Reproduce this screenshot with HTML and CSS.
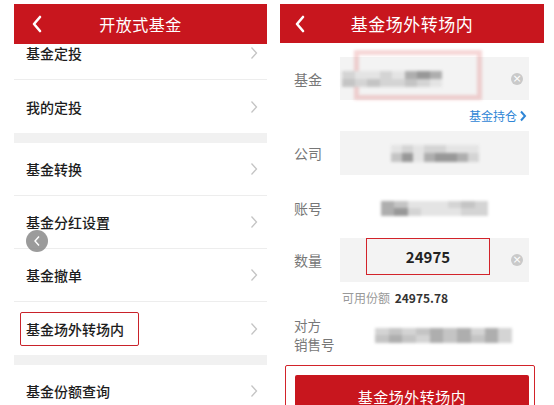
FILE: index.html
```html
<!DOCTYPE html>
<html lang="zh-CN">
<head>
    <meta charset="UTF-8">
    <meta name="viewport" content="width=device-width, initial-scale=1.0">
    <title>基金场外转场内</title>
    <link rel="stylesheet" href="styles.css">
</head>
<body>
    <!-- Ecranul din stanga: lista fondurilor -->
    <section class="panel panel-left">
        <header class="topbar">
            <svg class="back" width="12" height="18" viewBox="0 0 12 18"><polyline points="9,2 3,9 9,16" fill="none" stroke="#fff" stroke-width="2.6" stroke-linecap="round" stroke-linejoin="round"/></svg>
            <h1>开放式基金</h1>
            <span></span>
        </header>
        <div class="menu">
            <div class="item"><span>基金定投</span><svg class="arrow" width="8" height="14" viewBox="0 0 8 14"><polyline points="1.5,1.5 6.5,7 1.5,12.5" fill="none" stroke="#c4c4c4" stroke-width="1.3"/></svg></div>
            <div class="item last"><span>我的定投</span><svg class="arrow" width="8" height="14" viewBox="0 0 8 14"><polyline points="1.5,1.5 6.5,7 1.5,12.5" fill="none" stroke="#c4c4c4" stroke-width="1.3"/></svg></div>
            <div class="band"></div>
            <div class="item"><span>基金转换</span><svg class="arrow" width="8" height="14" viewBox="0 0 8 14"><polyline points="1.5,1.5 6.5,7 1.5,12.5" fill="none" stroke="#c4c4c4" stroke-width="1.3"/></svg></div>
            <div class="item"><span>基金分红设置</span><svg class="arrow" width="8" height="14" viewBox="0 0 8 14"><polyline points="1.5,1.5 6.5,7 1.5,12.5" fill="none" stroke="#c4c4c4" stroke-width="1.3"/></svg></div>
            <div class="item"><span>基金撤单</span><svg class="arrow" width="8" height="14" viewBox="0 0 8 14"><polyline points="1.5,1.5 6.5,7 1.5,12.5" fill="none" stroke="#c4c4c4" stroke-width="1.3"/></svg></div>
            <div class="item last"><span class="marked">基金场外转场内</span><svg class="arrow" width="8" height="14" viewBox="0 0 8 14"><polyline points="1.5,1.5 6.5,7 1.5,12.5" fill="none" stroke="#c4c4c4" stroke-width="1.3"/></svg></div>
            <div class="band"></div>
            <div class="item"><span>基金份额查询</span><svg class="arrow" width="8" height="14" viewBox="0 0 8 14"><polyline points="1.5,1.5 6.5,7 1.5,12.5" fill="none" stroke="#c4c4c4" stroke-width="1.3"/></svg></div>
        </div>
        <div class="float-back">
            <svg width="8" height="12" viewBox="0 0 8 12"><polyline points="6,1.5 2,6 6,10.5" fill="none" stroke="#fff" stroke-width="1.4"/></svg>
        </div>
    </section>

    <!-- Ecranul din dreapta: formularul de transfer -->
    <section class="panel panel-right">
        <header class="topbar">
            <svg class="back" width="12" height="18" viewBox="0 0 12 18"><polyline points="9,2 3,9 9,16" fill="none" stroke="#fff" stroke-width="2.6" stroke-linecap="round" stroke-linejoin="round"/></svg>
            <h1>基金场外转场内</h1>
            <span></span>
        </header>

        <div class="row row-fund">
            <label class="lbl">基金</label>
            <div class="field grey">
                <div class="pink-mark"></div>
                <div class="mosaic m-fund">
                    <i class="c2"></i><i class="c1"></i><i class="c1"></i><i class="c2"></i><i class="c1"></i><i class="c4"></i><i class="c5"></i><i class="c4"></i>
                    <i class="c3"></i><i class="c2"></i><i class="c3"></i><i class="c2"></i><i class="c2"></i><i class="c3"></i><i class="c2"></i><i class="c1"></i>
                </div>
                <span class="clear">×</span>
            </div>
        </div>
        <div class="hold-link">基金持仓<svg width="8" height="12" viewBox="0 0 8 12"><polyline points="2,1.5 6,6 2,10.5" fill="none" stroke="#2f86d6" stroke-width="2"/></svg></div>

        <div class="row row-company">
            <label class="lbl">公司</label>
            <div class="field grey centered">
                <div class="mosaic m-company">
                    <i class="c1"></i><i class="c2"></i><i class="c1"></i><i class="c2"></i><i class="c2"></i><i class="c1"></i><i class="c1"></i><i class="c1"></i>
                    <i class="c3"></i><i class="c5"></i><i class="c1"></i><i class="c4"></i><i class="c5"></i><i class="c5"></i><i class="c4"></i><i class="c2"></i>
                </div>
            </div>
        </div>

        <div class="row row-account">
            <label class="lbl">账号</label>
            <div class="field centered">
                <div class="mosaic m-account">
                    <i class="c4"></i><i class="c3"></i><i class="c1"></i><i class="c1"></i><i class="c1"></i><i class="c2"></i><i class="c3"></i><i class="c2"></i>
                    <i class="c4"></i><i class="c5"></i><i class="c2"></i><i class="c1"></i><i class="c1"></i><i class="c1"></i><i class="c2"></i><i class="c2"></i>
                </div>
            </div>
        </div>

        <div class="row row-amount">
            <label class="lbl">数量</label>
            <div class="field grey">
                <div class="amount-box">24975</div>
                <span class="clear">×</span>
            </div>
        </div>
        <div class="available">可用份额 <b>24975.78</b></div>

        <div class="row row-party">
            <label class="lbl lbl-two"><span>对方</span><span>销售号</span></label>
            <div class="field">
                <div class="mosaic m-party">
                    <i class="c2"></i><i class="c3"></i><i class="c2"></i><i class="c3"></i><i class="c4"></i><i class="c3"></i><i class="c4"></i><i class="c2"></i><i class="c4"></i><i class="c2"></i>
                    <i class="c3"></i><i class="c4"></i><i class="c3"></i><i class="c2"></i><i class="c4"></i><i class="c3"></i><i class="c4"></i><i class="c3"></i><i class="c4"></i><i class="c2"></i>
                </div>
            </div>
        </div>

        <div class="submit-wrap">
            <button class="submit">基金场外转场内</button>
        </div>
    </section>
</body>
</html>
```

FILE: styles.css
```css
/* Pagina: doua ecrane de telefon alaturate */
body {
    margin: 0;
    padding: 0 0 0 14px;
    background: #fff;
    font-family: "Noto Sans CJK SC", "Noto Sans", sans-serif;
    display: flex;
    gap: 13px;
    height: 405px;
    overflow: hidden;
}
.panel {
    position: relative;
    padding-top: 4px;
    height: 401px;
    overflow: hidden;
    background: #fff;
}
.panel-left {
    width: 253px;
}
.panel-right {
    width: 264px;
}

/* Bara rosie de sus */
.topbar {
    position: relative;
    z-index: 1;
    display: grid;
    grid-template-columns: 44px 1fr 44px;
    align-items: center;
    height: 40px;
    background: #c8161e;
}
.panel-right .topbar {
    height: 39px;
}
.topbar .back {
    margin-left: 17px;
}
.panel-right .topbar .back {
    margin-left: 14px;
}
.topbar h1 {
    margin: 0;
    font-size: 16px;
    font-weight: 400;
    color: #fff;
    text-align: center;
    letter-spacing: 0.5px;
}
.panel-right .topbar h1 {
    font-size: 17px;
}

/* Lista din stanga */
.menu {
    margin-top: -17px;
}
.item {
    display: flex;
    align-items: center;
    justify-content: space-between;
    box-sizing: border-box;
    height: 53px;
    padding: 0 9px 0 12px;
    border-bottom: 1px solid #ededed;
    font-size: 14px;
    color: #1c1c1c;
    font-weight: 500;
}
.item.last {
    border-bottom: none;
}
.band {
    height: 10px;
    background: #f1f1f1;
}
.marked {
    margin-left: -6px;
    padding: 6px 14px 6px 5px;
    border: 1.5px solid #c9222a;
    border-radius: 2px;
}
.float-back {
    position: absolute;
    left: 12px;
    top: 230px;
    width: 22px;
    height: 22px;
    border-radius: 50%;
    background: rgba(130, 130, 130, 0.8);
    display: flex;
    align-items: center;
    justify-content: center;
}

/* Formularul din dreapta */
.row {
    display: flex;
    align-items: center;
    height: 44px;
}
.lbl {
    width: 46px;
    padding-left: 14px;
    font-size: 14px;
    line-height: 16px;
    color: #777;
}
.lbl-two {
    display: flex;
    flex-direction: column;
    font-size: 13.5px;
    line-height: 19px;
    white-space: nowrap;
}
.field {
    position: relative;
    display: flex;
    align-items: center;
    width: 189px;
    height: 100%;
}
.field.grey {
    background: #f3f3f3;
}
.field.centered {
    justify-content: center;
}
.row-fund {
    margin-top: 14px;
    height: 43px;
}
.row-account {
    margin-top: 11px;
}
.row-amount {
    margin-top: 8px;
}
.row-party {
    margin-top: 7px;
}
.clear {
    margin-left: auto;
    margin-right: 6px;
    width: 12px;
    height: 12px;
    border-radius: 50%;
    background: #c9c9c9;
    color: #fff;
    font-size: 11px;
    line-height: 12px;
    text-align: center;
    font-family: "DejaVu Sans", sans-serif;
}

/* Zonele pixelate (date ascunse) */
.mosaic {
    display: grid;
    grid-template-columns: repeat(8, 1fr);
    filter: blur(1.4px);
}
.mosaic i {
    display: block;
}
.mosaic .c1 { background: #e4e4e4; }
.mosaic .c2 { background: #d4d4d4; }
.mosaic .c3 { background: #c4c4c4; }
.mosaic .c4 { background: #aeaeae; }
.mosaic .c5 { background: #989898; }
.m-fund {
    margin-left: 2px;
    width: 100px;
    height: 16px;
}
.m-company {
    width: 88px;
    height: 17px;
}
.m-account {
    width: 107px;
    height: 15px;
}
.m-party {
    grid-template-columns: repeat(10, 1fr);
    margin-left: 35px;
    width: 137px;
    height: 15px;
}
.pink-mark {
    position: absolute;
    left: 14px;
    top: -7px;
    width: 118px;
    height: 40px;
    border: 5px solid rgba(225, 120, 120, 0.3);
    filter: blur(1.8px);
}

.hold-link {
    box-sizing: border-box;
    height: 31px;
    padding: 8px 17px 0 0;
    text-align: right;
    font-size: 12px;
    line-height: 16px;
    color: #2f86d6;
}
.hold-link svg {
    margin-left: 2px;
    vertical-align: -1px;
}

.amount-box {
    align-self: flex-start;
    box-sizing: border-box;
    margin-left: 26px;
    width: 124px;
    height: 37px;
    border: 1.5px solid #d2232a;
    display: flex;
    align-items: center;
    justify-content: center;
    font-size: 15px;
    font-weight: 700;
    color: #222;
}
.available {
    box-sizing: border-box;
    height: 24px;
    padding: 8px 0 0 62px;
    font-size: 12px;
    line-height: 16px;
    color: #999;
}
.available b {
    color: #333;
    margin-left: 2px;
}

/* Butonul rosu de jos */
.submit-wrap {
    margin: 8px 9px 0 5px;
    padding: 9px 5px 0 9px;
    border: 1.5px solid #d2232a;
    border-radius: 2px;
}
.submit {
    display: block;
    width: 100%;
    height: 42px;
    border: none;
    border-radius: 2px;
    background: #c8161e;
    color: #fff;
    font-family: inherit;
    font-size: 15px;
    letter-spacing: 0.5px;
}
```
